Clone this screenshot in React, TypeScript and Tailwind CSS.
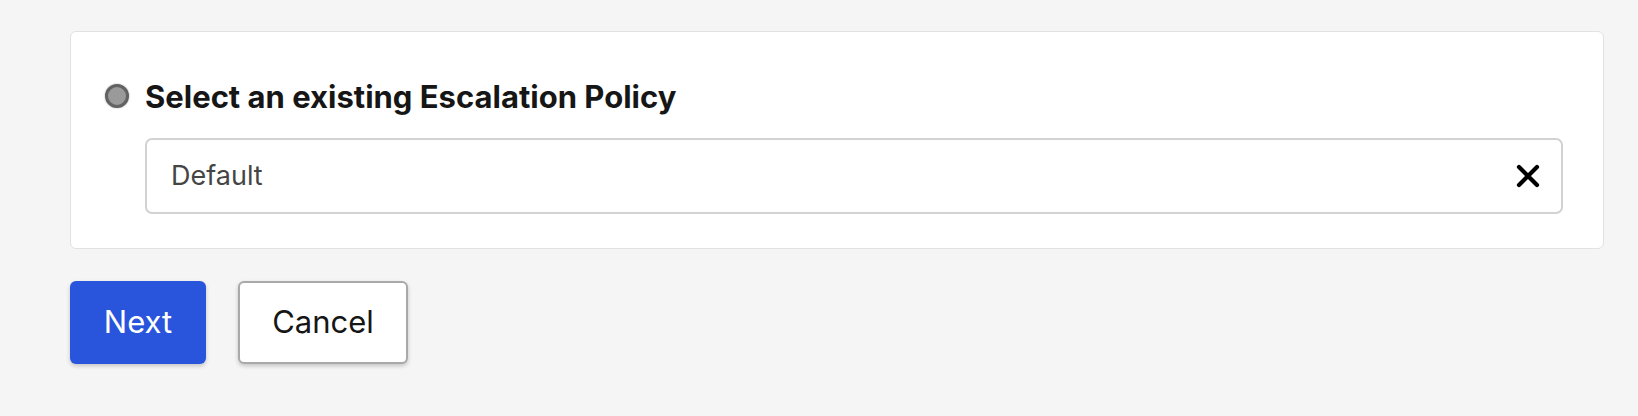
export default function App() {
    return (
        <main className="w-[1638px] h-[416px] bg-[#f5f5f5] pl-[70px] pr-[34px] pt-[31px] font-['Inter',sans-serif]">
            {/* Policy card */}
            <div className="bg-white border border-[#e2e2e2] rounded-md pl-[34px] pr-[40px] pt-[46px] pb-[34px]">
                <label className="flex items-center gap-[16px] h-[36px]">
                    <span className="w-[24px] h-[24px] rounded-full bg-[#9a9a9a] border-[3px] border-[#626262] shadow-[0_0_2px_rgba(0,0,0,0.35)] shrink-0" />
                    <span className="text-[31px] font-bold text-[#161616] mt-[3px]">Select an existing Escalation Policy</span>
                </label>
                <div className="ml-[40px] mt-[24px] h-[76px] border-2 border-[#d2d2d2] rounded-[7px] flex items-center justify-between pl-[24px] pr-[21px]">
                    <span className="text-[27px] text-[#454545]">Default</span>
                    <svg width="24" height="24" viewBox="0 0 24 24" className="text-black">
                        <path d="M3 3L21 21M21 3L3 21" stroke="currentColor" strokeWidth="4.2" strokeLinecap="round" />
                    </svg>
                </div>
            </div>

            {/* Actions */}
            <div className="flex gap-[32px] mt-[32px]">
                <button className="w-[136px] h-[83px] bg-[#2955dc] text-white text-[31px] rounded-md shadow-[0_2px_4px_rgba(0,0,0,0.2)]">
                    Next
                </button>
                <button className="w-[170px] h-[83px] bg-white border-2 border-[#a9a9a9] text-[#161616] text-[31px] rounded-md shadow-[0_2px_4px_rgba(0,0,0,0.2)]">
                    Cancel
                </button>
            </div>
        </main>
    );
}
